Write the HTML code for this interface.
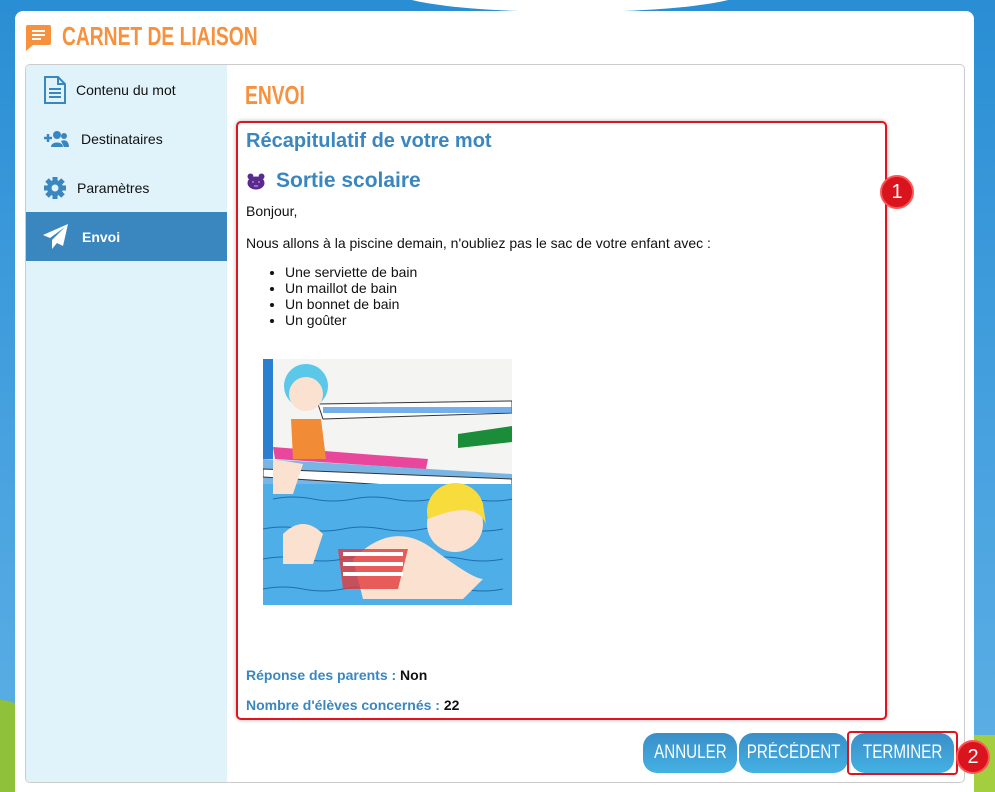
<!DOCTYPE html>
<html><head><meta charset="utf-8"><style>
*{margin:0;padding:0;box-sizing:border-box}
html,body{width:995px;height:792px;overflow:hidden}
body{position:relative;font-family:"Liberation Sans",sans-serif;background:linear-gradient(#2a8ed4,#4aa3e0 60%,#5db0e5);}
.cloud{position:absolute;left:395px;top:-30px;width:350px;height:42px;background:#fff;border-radius:50%}
.grass1{position:absolute;left:-40px;top:700px;width:80px;height:92px;background:#8fc23a;border-radius:50% 50% 0 0}
.grass2{position:absolute;left:955px;top:735px;width:40px;height:57px;background:#a3cf3f;border-radius:40% 0 0 0}
.card{position:absolute;left:15px;top:11px;width:959px;height:781px;background:#fff;border-radius:8px 8px 0 0}
.title{position:absolute;left:62px;top:21px;color:#f7913d;font-size:26px;font-weight:bold;transform:scaleX(.74);transform-origin:left}
.inner{position:absolute;left:25px;top:64px;width:940px;height:719px;border:1px solid #ccc;border-radius:5px;overflow:hidden}
.side{position:absolute;left:0;top:0;width:201px;height:100%;background:#e0f2fa}
.item{position:absolute;left:0;width:201px;height:49px;font-size:14px;color:#111;display:flex;align-items:center}
.item.act{background:#3a87c0;color:#fff;font-weight:bold}
.envoi{position:absolute;left:219px;top:15px;color:#f7913d;font-size:26px;font-weight:bold;transform:scaleX(.74);transform-origin:left}
.box{position:absolute;left:236px;top:121px;width:651px;height:599px;border:2px solid #e0141e;border-radius:5px;box-shadow:0 0 4px rgba(0,0,0,.3);background:#fff}
.h1{position:absolute;left:246px;top:130px;color:#3a87c0;font-size:20px;font-weight:bold}
.h2{position:absolute;left:276px;top:169px;color:#3a87c0;font-size:21px;font-weight:bold}
.t{position:absolute;left:246px;font-size:14px;color:#111}
ul{position:absolute;left:285px;top:264px;font-size:14px;line-height:16px;color:#111}
.lbl{color:#3a87c0;font-weight:bold;font-size:14px}
.btn{position:absolute;top:733px;height:40px;border-radius:14px;background:linear-gradient(#3a8fc8,#44b1e3);color:#fff;font-size:19px;display:flex;align-items:center;justify-content:center}
.btn span{display:inline-block;transform:scaleX(.8)}
.badge{position:absolute;width:34px;height:34px;border-radius:50%;background:#d9141c;border:2px solid #f55;color:#fff;font-size:20px;display:flex;align-items:center;justify-content:center}
</style></head><body>
<div class="cloud"></div><div class="grass1"></div><div class="grass2"></div>
<div class="card"></div>
<svg style="position:absolute;left:26px;top:25px" width="25" height="26" viewBox="0 0 25 26"><path d="M2 0h21a2 2 0 0 1 2 2v16a2 2 0 0 1-2 2H7l-7 6V2a2 2 0 0 1 2-2z" fill="#f7913d"/><path d="M6 6h13M6 10h13M6 14h9" stroke="#fff" stroke-width="2"/></svg>
<div class="title">CARNET DE LIAISON</div>
<div class="inner">
<div class="side">
<div class="item" style="top:0"><svg style="margin:0 9px 0 17px" width="24" height="28" viewBox="0 0 24 28"><path d="M2 1h13l7 7v19H2z" fill="none" stroke="#3a87c0" stroke-width="2"/><path d="M15 1v7h7M6 13h12M6 17h12M6 21h12" stroke="#3a87c0" stroke-width="2" fill="none"/></svg>Contenu du mot</div>
<div class="item" style="top:49px"><svg style="margin:0 12px 0 17px" width="26" height="18" viewBox="0 0 26 18"><path d="M1 8h8M5 4v8" stroke="#3a87c0" stroke-width="2.5"/><circle cx="14" cy="5" r="4" fill="#3a87c0"/><circle cx="21" cy="6" r="3" fill="#3a87c0"/><path d="M8 17c0-6 12-6 12 0zM18 11c4-2 8 0 8 6h-5z" fill="#3a87c0"/></svg>Destinataires</div>
<div class="item" style="top:98px"><svg style="margin:0 10px 0 17px" width="24" height="24" viewBox="0 0 24 24"><circle cx="12" cy="12" r="8" fill="#3a87c0"/><g stroke="#3a87c0" stroke-width="5"><path d="M12 1v22M1 12h22M4 4l16 16M20 4L4 20"/></g><circle cx="12" cy="12" r="3.5" fill="#e0f2fa"/></svg>Paramètres</div>
<div class="item act" style="top:147px"><svg style="margin:0 13px 0 16px" width="27" height="27" viewBox="0 0 27 27"><path d="M26 1L1 12l7 3 15-11L10 17v9l5-6 6 3z" fill="#fff"/></svg>Envoi</div>
</div>
<div class="envoi">ENVOI</div>
</div>
<div class="box"></div>
<div class="h1">Récapitulatif de votre mot</div>
<svg style="position:absolute;left:247px;top:173px" width="18" height="17" viewBox="0 0 18 17"><circle cx="3.5" cy="3.5" r="3" fill="#5b2a8f"/><circle cx="14.5" cy="3.5" r="3" fill="#5b2a8f"/><ellipse cx="9" cy="10" rx="8.5" ry="6.5" fill="#5b2a8f"/><path d="M5 9h2M11 9h2M7 13h4" stroke="#c9b3e8" stroke-width="1"/></svg>
<div class="h2">Sortie scolaire</div>
<div class="t" style="top:203px">Bonjour,</div>
<div class="t" style="top:235px">Nous allons à la piscine demain, n'oubliez pas le sac de votre enfant avec :</div>
<ul><li>Une serviette de bain</li><li>Un maillot de bain</li><li>Un bonnet de bain</li><li>Un goûter</li></ul>
<svg style="position:absolute;left:263px;top:359px" width="249" height="246" viewBox="0 0 249 246">
<rect width="249" height="246" fill="#f4f4f2"/>
<path d="M0 0h10v100H0z" fill="#2a7fd0"/>
<path d="M55 45L249 42v12L60 60z" fill="#fff" stroke="#333"/>
<path d="M60 48h190v6H60z" fill="#3a8ce0" opacity=".7"/>
<path d="M0 100L249 115v80L0 130z" fill="#5aa5e0" opacity=".8"/>
<path d="M0 110L249 120v14L0 118z" fill="#fff" stroke="#333"/>
<rect x="0" y="125" width="249" height="121" fill="#4eaee8"/>
<path d="M10 140q20-4 40 0t40 0t40 0t40 0t40 0t40 0M0 170q20-4 40 0t40 0t40 0t40 0t40 0t40 0M0 200q20-4 40 0t40 0t40 0t40 0t40 0t40 0M0 230q20-4 40 0t40 0t40 0t40 0t40 0t40 0" stroke="#1d6fb0" fill="none"/>
<path d="M10 88L165 100l-2 10L12 100z" fill="#e8479c"/>
<path d="M195 75l54-8v16l-54 6z" fill="#1a8c3a"/>
<circle cx="43" cy="27" r="22" fill="#5bc8ea"/><circle cx="43" cy="35" r="17" fill="#fbe1cf"/>
<path d="M28 60h30l5 40H30z" fill="#f28b36"/>
<path d="M10 100l30 5-10 30H10z" fill="#fbe1cf"/>
<path d="M90 200q40-40 80-10t50 30l-20 20H100z" fill="#fbe1cf"/>
<path d="M75 190h70l-10 40H80z" fill="#e23a3a" opacity=".8"/>
<path d="M80 195h60M80 205h60M80 215h60" stroke="#fff" stroke-width="4"/>
<circle cx="192" cy="165" r="28" fill="#fbe1cf"/>
<path d="M165 160a28 28 0 0 1 55-15l3 20q-10-25-58-5z" fill="#f7dc3b"/>
<path d="M20 175q20-20 40 0l-10 30H20z" fill="#fbe1cf"/>
</svg>
<div class="t" style="top:667px"><span class="lbl">Réponse des parents : </span><b>Non</b></div>
<div class="t" style="top:697px"><span class="lbl">Nombre d'élèves concernés : </span><b>22</b></div>
<div class="badge" style="left:880px;top:175px">1</div>
<div class="btn" style="left:643px;width:94px"><span>ANNULER</span></div>
<div class="btn" style="left:739px;width:109px"><span>PRÉCÉDENT</span></div>
<div class="btn" style="left:851px;width:103px"><span>TERMINER</span></div>
<div style="position:absolute;left:847px;top:731px;width:111px;height:44px;border:2px solid #e0141e;border-radius:4px"></div>
<div class="badge" style="left:956px;top:740px">2</div>
</body></html>
